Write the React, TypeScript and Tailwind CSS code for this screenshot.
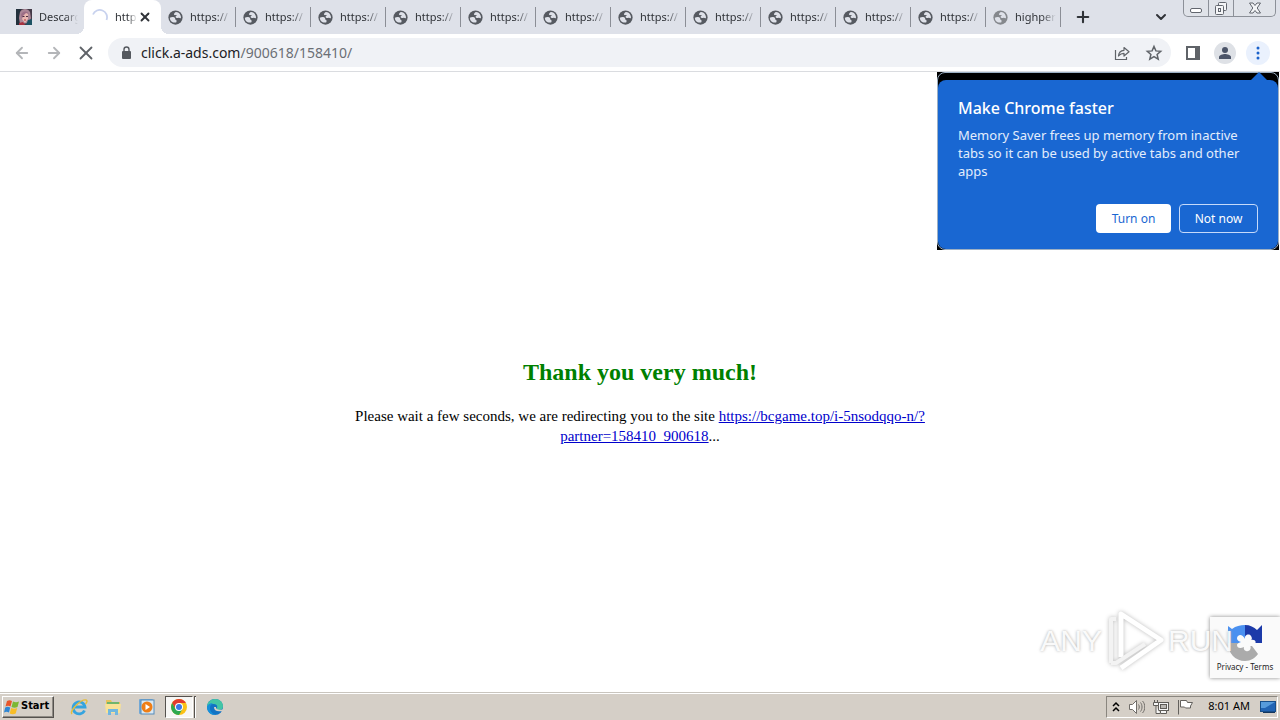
import React from 'react';
import { ArrowLeft, ArrowRight, X, Plus, ChevronDown } from 'lucide-react';

const httpsTabs = Array.from({ length: 11 }, (_, i) => i);

const GlobeIcon = ({ className }: { className: string }) => (
  <svg viewBox="0 0 16 16" className={`w-[15px] h-[15px] shrink-0 ${className}`}>
    <circle cx="8" cy="8" r="7.6" fill="currentColor" />
    <path
      d="M2 8.200c1.500-.8 4.600-.9 5.400.2.600.800-.2 1.500.8 1.900 1.200.4 1.300 1.700.5 2.900C5 14.200 2 11.800 2 8.200zM8.500 2.200c2 0 3.900 1.300 4.800 3.300.5 1 .7 2 .5 3-.9.6-1.500-.3-2.400-.2-1 .1-1.600.7-2.600 0-1.200-.8-.8-1.800.1-2.200.8-.4.300-.9-.6-.7-1.200.3-2.300-.2-1.800-1.300.4-.9 1.100-1.700 2-1.900z"
      fill="#dee1e9"
    />
  </svg>
);

const FaviconIcon = () => (
  <svg viewBox="0 0 16 16" className="w-4 h-4 shrink-0">
    <rect width="16" height="16" fill="#433a48" />
    <path d="M0 0h5L3 7l1 9H0z" fill="#23313d" />
    <path d="M4 3c2-4 8-4 10 0l1 6-2 5-9 1-1-6z" fill="#ab8797" />
    <path d="M6 5c1-2 5-2 6 0v5l-3 4-3-4z" fill="#e9b9b2" />
    <path d="M5 6c1-4 6-5 8-1l-3-1-3 3-1 3z" fill="#9c6e86" />
    <path d="M6.500 7.500h2M10 7.500h2" stroke="#4b2d40" />
    <path d="M8 11h2" stroke="#b8343f" />
    <path d="M12 11l4-1v6h-6z" fill="#1d5263" />
    <path d="M3 14l4-1 2 3H3z" fill="#a9313f" />
  </svg>
);

const Tab = ({ label, iconClass }: { label: string; iconClass: string }) => (
  <button className="h-[34px] w-[75px] shrink-0 pl-[7px] flex items-center text-left">
    <GlobeIcon className={iconClass} />
    <span className="ml-[7px] min-w-0 flex-1 overflow-hidden whitespace-nowrap [mask-image:linear-gradient(to_right,black_65%,transparent_100%)]">
      {label}
    </span>
    <span className="ml-1 w-px h-5 shrink-0 bg-[#8b8e96]" />
  </button>
);

const TabStrip = () => (
  <div className="h-[34px] bg-[#dee1e9] flex items-center text-[11px] text-[#303338] overflow-hidden">
    <button className="h-[34px] w-[84px] shrink-0 pl-4 pr-1 flex items-center text-left">
      <FaviconIcon />
      <span className="ml-[7px] min-w-0 flex-1 overflow-hidden whitespace-nowrap [mask-image:linear-gradient(to_right,black_65%,transparent_95%)]">
        Descarg
      </span>
    </button>
    <div className="relative h-[34px] w-[77px] shrink-0 bg-white rounded-t-lg flex items-center pl-2">
      <span className="absolute bottom-0 -left-2 w-2 h-2 bg-[radial-gradient(circle_at_top_left,transparent_8px,white_8px)]" />
      <span className="absolute bottom-0 -right-2 w-2 h-2 bg-[radial-gradient(circle_at_top_right,transparent_8px,white_8px)]" />
      <svg viewBox="0 0 16 16" className="w-4 h-4 shrink-0" fill="none" stroke="#c8d2ee" strokeWidth="1.800">
        <path d="M1 5.500A7.200 7.200 0 0 1 14.500 11" />
      </svg>
      <span className="ml-[7px] w-[22px] overflow-hidden whitespace-nowrap [mask-image:linear-gradient(to_right,black_60%,transparent_100%)]">
        http
      </span>
      <button aria-label="Close tab" className="ml-px">
        <X className="w-[14px] h-[14px]" strokeWidth={3.2} />
      </button>
    </div>
    {httpsTabs.map((i) => (
      <Tab key={i} label="https://" iconClass="text-[#565a61]" />
    ))}
    <Tab label="highper" iconClass="text-[#85888d]" />
    <button aria-label="New tab" className="ml-[13px] shrink-0">
      <Plus className="w-[18px] h-[18px]" strokeWidth={2.8} />
    </button>
    <div className="flex-1" />
    <button aria-label="Search tabs" className="mr-[14px] shrink-0">
      <ChevronDown className="w-4 h-4" strokeWidth={3} />
    </button>
    <div className="self-start mr-1 h-[17px] w-[93px] shrink-0 flex rounded-b-[5px] border border-t-0 border-[#8c9098] divide-x divide-[#8c9098] bg-[#e0e3e9]">
      <button aria-label="Minimize" className="w-[25px] flex justify-center">
        <svg viewBox="0 0 14 14" className="w-[14px] h-[14px]" fill="#fff" stroke="#62666e">
          <rect x="1.500" y="8.500" width="11" height="4" rx="1.500" />
        </svg>
      </button>
      <button aria-label="Restore" className="w-[25px] flex justify-center">
        <svg viewBox="0 0 14 14" className="w-[14px] h-[14px] mt-[2px]" fill="#f4f5f7" stroke="#62666e">
          <rect x="4.500" y=".5" width="8" height="8" rx="1" />
          <rect x="1.500" y="3.500" width="8" height="9" rx="1" />
          <rect x="4.500" y="6.500" width="2" height="3" />
        </svg>
      </button>
      <button aria-label="Close" className="flex-1 flex justify-center">
        <svg viewBox="0 0 14 14" className="w-[14px] h-[14px] mt-px" fill="#f4f5f7" stroke="#62666e">
          <path d="M1.500 2h3.500l2 2.500L9 2h3.500L9.200 7l3.300 5H9L7 9.500 5 12H1.500l3.300-5z" />
        </svg>
      </button>
    </div>
  </div>
);

const Toolbar = () => (
  <div className="h-[38px] bg-white border-b border-[#dadce0] flex items-center pl-[13px] pr-[10px] text-[#5f6368]">
    <button aria-label="Back"><ArrowLeft className="w-[18px] h-[18px] text-[#b4b6b9]" strokeWidth={2.4} /></button>
    <button aria-label="Forward" className="ml-[14px]"><ArrowRight className="w-[18px] h-[18px] text-[#b4b6b9]" strokeWidth={2.4} /></button>
    <button aria-label="Stop" className="ml-3"><X className="w-[22px] h-[22px]" strokeWidth={2} /></button>
    <div className="ml-[11px] h-[29px] flex-1 rounded-full bg-[#f0f2f6] flex items-center pl-3 pr-2">
      <svg viewBox="0 0 12 14" className="w-3 h-[14px]" fill="#55595f">
        <rect x="2" y="5" width="9" height="8" rx="1" />
        <path d="M4 6V3.500a2.500 2.500 0 0 1 5 0V6" fill="none" stroke="#55595f" strokeWidth="1.400" />
      </svg>
      {/* the typed address stays transparent so host and path can be tinted apart */}
      <label className="relative ml-[9px] flex-1 h-5 text-sm leading-5">
        <span aria-hidden="true" className="text-[#6b6f75]">
          <span className="text-[#202124]">click.a-ads.com</span>/900618/158410/
        </span>
        <input
          aria-label="Address and search bar"
          defaultValue="click.a-ads.com/900618/158410/"
          className="absolute inset-0 w-full bg-transparent text-transparent outline-none"
        />
      </label>
      <button aria-label="Share this page">
        <svg viewBox="0 0 18 18" className="w-[18px] h-[18px]" fill="none" stroke="currentColor" strokeWidth="1.200">
          <path d="M2.500 6v9.500h11V13" />
          <path d="M5.500 12c.2-3.500 2-5.500 5.500-5.700V3.500l5 4.300-5 4.200V9.300c-2.500 0-4 .8-5.500 2.700z" strokeLinejoin="round" />
        </svg>
      </button>
      <button aria-label="Bookmark this tab" className="ml-[14px]">
        <svg viewBox="0 0 18 18" className="w-[18px] h-[18px]" fill="none" stroke="currentColor" strokeWidth="1.500">
          <path d="M9 2.500l1.900 4.400 4.800.4-3.600 3.200 1.100 4.700L9 12.700l-4.200 2.500 1.100-4.700-3.600-3.200 4.800-.4z" />
        </svg>
      </button>
    </div>
    <button aria-label="Side panel" className="ml-[15px]">
      <svg viewBox="0 0 14 14" className="w-[14px] h-[14px]">
        <rect x="1" y="1" width="12" height="12" fill="#fff" stroke="#5f6368" strokeWidth="2" />
        <path d="M9 1h4v12H9z" fill="#5f6368" />
      </svg>
    </button>
    <button aria-label="Profile" className="ml-[14px] w-[22px] h-[22px] rounded-full bg-[#dee1e6] flex items-center justify-center">
      <svg viewBox="0 0 14 14" className="w-[14px] h-[14px]" fill="#4b5468">
        <circle cx="7" cy="4" r="3" />
        <path d="M1 13v-2c0-2 4-3 6-3s6 1 6 3v2z" />
      </svg>
    </button>
    <button aria-label="Menu" className="ml-[10px] w-6 h-6 rounded-full bg-[#eaf1fd] flex items-center justify-center">
      <svg viewBox="0 0 4 14" className="w-1 h-[14px]" fill="#1b62cb">
        <circle cx="2" cy="2" r="1.500" />
        <circle cx="2" cy="7" r="1.500" />
        <circle cx="2" cy="12" r="1.500" />
      </svg>
    </button>
  </div>
);

const MemorySaverPopup = () => (
  <div className="absolute top-0 right-px w-[342px] bg-black px-px pt-2 pb-px">
    <span className="absolute inset-0 rounded-lg border border-[#9db0c4]" />
    <svg viewBox="0 0 16 8" className="absolute top-0 right-3 w-4 h-2" fill="#1967d2">
      <path d="M0 8l8-8 8 8z" />
    </svg>
    <div className="relative h-[169px] rounded-lg bg-[#1967d2] px-5 pt-4 pb-4 text-white flex flex-col">
      <h2 className="text-base leading-6 font-medium">Make Chrome faster</h2>
      <p className="mt-[6px] text-[13px] leading-[18px] text-[#e3edfc]">
        Memory Saver frees up memory from inactive tabs so it can be used by active tabs and other apps
      </p>
      <div className="mt-auto flex justify-end gap-2 text-xs">
        <button className="w-[75px] h-[29px] rounded bg-white text-[#1967d2]">Turn on</button>
        <button className="w-[79px] h-[29px] rounded border border-[#c6dafa]">Not now</button>
      </div>
    </div>
  </div>
);

const RecaptchaBadge = () => (
  <div className="absolute right-0 bottom-[14px] w-[70px] h-[61px] bg-[#fafafa] shadow-[0_0_4px_#888] flex flex-col items-center pt-[7px]">
    <svg viewBox="0 0 36 38" className="w-9 h-[38px]">
      <path d="M1 2l4 3C9 2 13 1 18 1v18H1z" fill="#4a90f0" />
      <path d="M18 1c5 0 9 2 12 5l5-5v18H18z" fill="#1c3aa9" />
      <path d="M1 19h17l4 3h3l6 8c-3 4-7 7-13 7C8 37 1 29 1 19z" fill="#ababab" />
      <path d="M20 19h15v1l-9 2z" fill="#fafafa" />
      <path d="M18 15c-1-4 4-6 6-3s0 4 0 4c5-1 6 3 3 5-2 1-4 0-4 0 2 4-1 7-4 6-3-1-2-4-2-4-4 2-7 1-7-2 0-2 4-3 4-3-4-1-5-4-3-6s5-1 7 3z" fill="#fafafa" />
    </svg>
    <div className="text-[8px] leading-[10px] text-[#222] whitespace-nowrap">
      <a href="#privacy">Privacy</a> - <a href="#terms">Terms</a>
    </div>
  </div>
);

const Watermark = () => (
  <div
    aria-hidden="true"
    className="absolute right-[47px] bottom-5 h-[62px] flex items-center gap-1 pointer-events-none font-['Liberation_Sans',sans-serif] text-[30px] leading-none text-white/90 [text-shadow:0_0_3px_#a8a8a8]"
  >
    <span>ANY</span>
    <svg viewBox="0 0 58 62" className="w-[58px] h-[62px] drop-shadow-[0_0_2px_#bbb]" fill="none" stroke="#fff" strokeWidth="5" strokeLinejoin="round">
      <path d="M15 47V4l40 26-40 28" />
      <path d="M5 53V9h5M5 53h5l29-19" stroke="#f3f3f3" strokeWidth="4" />
    </svg>
    <span>RUN</span>
  </div>
);

const PageContent = () => (
  <main className="relative flex-1 bg-white pt-[286px] pb-6 text-center font-['Liberation_Serif',serif] text-black">
    <div className="max-w-[600px] mx-auto">
      <h1 className="text-2xl leading-7 font-bold text-[#008000]">Thank you very much!</h1>
      <p className="mt-5 text-[15px] leading-5">
        Please wait a few seconds, we are redirecting you to the site{' '}
        <a href="#redirect" className="text-[#0000cc] underline">
          <span className="whitespace-nowrap">https://bcgame.top/i-5nsodqqo-n/?</span>
          <wbr />
          partner=158410_900618
        </a>
        ...
      </p>
    </div>
    <div className="font-['Noto_Sans',sans-serif] text-left">
      <MemorySaverPopup />
      <RecaptchaBadge />
    </div>
    <Watermark />
  </main>
);

const StartFlag = () => (
  <svg viewBox="0 0 18 16" className="w-[18px] h-4">
    <path d="M4 2c2-1 3-1 5 0L7.500 7.500c-2-1-3-1-5 0z" fill="#e8562a" />
    <path d="M10 2.500c2 1 4 1 6 0L14.500 8c-2 1-4 1-6 0z" fill="#7cb733" />
    <path d="M2.200 8.500c2-1 3-1 5 0L6 13.500c-2-1-3-1-5 0z" fill="#2f86d4" />
    <path d="M8.200 9c2 1 4 1 6 0l-1.500 5.500c-2 1-4 1-6 0z" fill="#f8bd27" />
  </svg>
);

const IeIcon = () => (
  <svg viewBox="0 0 18 18" className="w-[18px] h-[18px]" fill="none">
    <path d="M14.500 12.500A6 6 0 1 1 15 9H5" stroke="#35a4df" strokeWidth="2.800" />
    <path d="M2 16C-1 13 11 1 16 2c2 .5.500 3-.5 4" stroke="#e5bd3b" strokeWidth="1.400" />
  </svg>
);

const FolderIcon = () => (
  <svg viewBox="0 0 18 18" className="w-[18px] h-[18px]">
    <path d="M2 2h5l1 2h8v10H2z" fill="#e6c35c" />
    <path d="M3 4h12v5H3z" fill="#70b56c" />
    <path d="M1 6h16l-1 9H2z" fill="#f8e297" />
    <path d="M4 17v-6h10v6h-3v-3H7v3z" fill="#71b7de" />
  </svg>
);

const MediaIcon = () => (
  <svg viewBox="0 0 18 18" className="w-[18px] h-[18px]">
    <rect x="1" y="1" width="14" height="15" rx="1" fill="#73a8d5" />
    <rect x="3" y="2" width="13" height="14" fill="#d9e8f3" stroke="#568cba" />
    <circle cx="9" cy="9" r="5.500" fill="#ef7e16" />
    <path d="M7.500 6v6l4.500-3z" fill="#fff" />
  </svg>
);

const ChromeIcon = () => (
  <svg viewBox="0 0 18 18" className="w-[18px] h-[18px]">
    <circle cx="9" cy="9" r="8" fill="#fbc116" />
    <path d="M2.100 5A8 8 0 0 1 15.900 5H9L5.500 11z" fill="#e33b2e" />
    <path d="M2.100 5a8 8 0 0 0 6.900 12l3.500-6-7 0z" fill="#2da94f" />
    <circle cx="9" cy="9" r="4" fill="#fff" />
    <circle cx="9" cy="9" r="3" fill="#3b78e7" />
  </svg>
);

const EdgeIcon = () => (
  <svg viewBox="0 0 18 18" className="w-[18px] h-[18px]">
    <circle cx="9" cy="9" r="8" fill="#1273c4" />
    <path d="M1 9C1 4 5 1 9 1c5 0 8 3.500 8 7 0 3-2 4-4 4s-3-1-2-2c1-3-1-4-4-4-3 0-5 1-6 3z" fill="#43c5a5" />
    <path d="M1 9c1-3 3-4 6-4-2 1-3 3-3 5 0 4 3 6 6 6.900C5 17.500 1 14 1 9z" fill="#1690da" />
    <path d="M8 9c0 4 3 5 9 4l1-2c-2 1-6 1-7 0-1-.5-1-1-1-2z" fill="#d5cfc7" />
  </svg>
);

const Taskbar = () => (
  <footer className="h-7 bg-[#d5cfc7] border-t border-[#c9c5be] shadow-[inset_0_1px_0_#fff] flex items-center px-[2px] text-xs text-black">
    <button className="h-[22px] w-[52px] flex items-center border border-white border-r-[#55524e] border-b-[#55524e] shadow-[inset_-1px_-1px_0_#8f8b85] font-bold font-['DejaVu_Sans_Condensed','Noto_Sans',sans-serif] text-[11px]">
      <StartFlag />
      <span>Start</span>
    </button>
    <button aria-label="Internet Explorer" className="ml-4"><IeIcon /></button>
    <button aria-label="Explorer" className="ml-4"><FolderIcon /></button>
    <button aria-label="Media Player" className="ml-4"><MediaIcon /></button>
    <button aria-label="Chrome" className="ml-[9px] w-7 h-[22px] bg-[#f7f6f4] border border-[#55524e] border-r-white border-b-white flex items-center justify-center"><ChromeIcon /></button>
    <span className="ml-px w-[2px] h-[22px] border-l border-t border-[#55524e] bg-white" />
    <button aria-label="Edge" className="ml-[10px]"><EdgeIcon /></button>
    <div className="ml-auto h-[22px] w-[172px] border border-[#8a867f] border-r-white border-b-white flex items-center pl-1">
      <button aria-label="Show hidden icons">
        <svg viewBox="0 0 10 12" className="w-[10px] h-3" fill="none" stroke="#000" strokeWidth="1.500">
          <path d="M2 5l3-3 3 3M2 10l3-3 3 3" />
        </svg>
      </button>
      <button aria-label="Volume" className="ml-2">
        <svg viewBox="0 0 16 16" className="w-4 h-4" fill="#fff" stroke="#706d69">
          <path d="M.5 5.500h3l4-4v13l-4-4h-3z" />
          <path d="M9.500 5.500c1 1.500 1 3.500 0 5M11.500 3.500c2 2.500 2 6.500 0 9M13.500 2c3 3 3 9 0 12" fill="none" />
        </svg>
      </button>
      <button aria-label="Network" className="ml-2">
        <svg viewBox="0 0 16 16" className="w-4 h-4" fill="#f5f5f5" stroke="#5f5c58">
          <rect x="5.500" y="3.500" width="10" height="8" />
          <rect x="7.500" y="5.500" width="6" height="4" fill="#bbb8b4" />
          <path d="M7.500 14.500h6v-3h-6zM.5 3.500h5v3h-5zM1.500 1v2M4.500 1v2M3 7v7.500h4" />
        </svg>
      </button>
      <button aria-label="Action Center" className="ml-2">
        <svg viewBox="0 0 16 16" className="w-4 h-4" fill="#fff" stroke="#64615d">
          <path d="M1.500 1v14.500M3.500 1.500h6l1 2h5l-2 3.500 0 2h-5l-1-1h-4z" />
        </svg>
      </button>
      <span className="ml-auto mr-[10px] whitespace-nowrap text-[11px]">8:01 AM</span>
      <button aria-label="Show desktop" className="mr-px">
        <svg viewBox="0 0 16 14" className="w-4 h-[14px]">
          <rect x=".5" y="1.500" width="15" height="10" fill="#2264b4" stroke="#174e8a" />
          <path d="M1 2h14L5 8H1z" fill="#579bdc" />
          <path d="M3 12h12v1H3z" fill="#15365e" />
        </svg>
      </button>
    </div>
  </footer>
);

export default function App() {
  return (
    <div className="min-h-screen flex flex-col bg-white font-['Noto_Sans',sans-serif]">
      <TabStrip />
      <Toolbar />
      <PageContent />
      <Taskbar />
    </div>
  );
}
